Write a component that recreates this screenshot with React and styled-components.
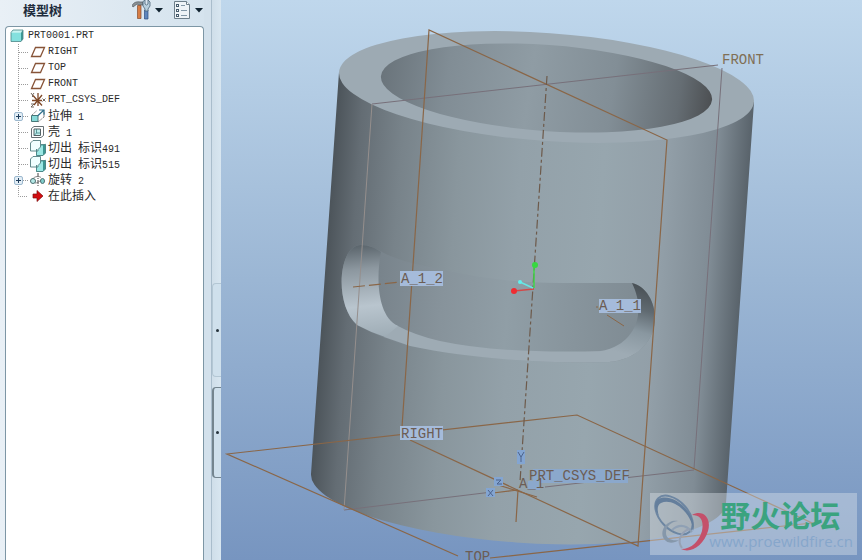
import React, { useState } from "react";
import styled, { createGlobalStyle } from "styled-components";

const GlobalStyle = createGlobalStyle`
  * {
    box-sizing: border-box;
  }

  body {
    margin: 0;
    font-family: "Liberation Mono", "Noto Sans CJK SC", monospace;
    color: #2a2a2a;
  }
`;

const Container = styled.div`
  display: flex;
  height: 100vh;
  overflow: hidden;
  background: #d3e1ec;
`;

//model tree
const SidePanel = styled.aside`
  display: flex;
  flex-direction: column;
  flex: 0 0 204px;
  padding-left: 5px;

  background: linear-gradient(90deg, #e9f0f6, #d5e3ee);
`;

const PanelHeader = styled.header`
  display: flex;
  align-items: center;
  height: 26px;
  padding: 0 1px 6px 18px;
`;

const Title = styled.h1`
  flex: 1;
  margin: 0;

  color: #1e2c3c;
  font-family: "Noto Sans CJK SC", sans-serif;
  font-size: 13px;
  font-weight: 700;
  line-height: 20px;
`;

const ToolBtn = styled.button`
  display: flex;
  align-items: center;
  gap: 4px;
  margin-left: 10px;
  padding: 0;

  border: none;
  background: none;
  cursor: pointer;
`;

const TreeBox = styled.nav`
  flex: 1;
  padding-top: 1px;

  border: 1px solid #7d96a5;
  border-bottom: none;
  border-radius: 4px 4px 0 0;
  background: #fff;
`;

const TreeList = styled.ul`
  margin: 0;
  padding: 0;
  list-style: none;
`;

const TreeRow = styled.div`
  display: flex;
  align-items: center;
  gap: ${(props) => (props.$root ? "4px" : "2px")};
  height: 16px;
  padding-left: ${(props) => (props.$root ? "4px" : "0")};
`;

const Branch = styled.div`
  display: grid;
  align-items: center;
  width: 22px;
  height: 16px;

  > * {
    grid-area: 1 / 1;
  }
`;

const Expander = styled.button`
  width: 9px;
  height: 9px;
  margin-left: 8px;
  padding: 0;

  border: 1px solid #9db9cf;
  border-radius: 2px;
  background: #e2edf5;
  line-height: 0;
  cursor: pointer;

  svg {
    display: block;
  }
`;

const Label = styled.span`
  font-size: 10px;
  line-height: 16px;
  white-space: pre;
`;

const Hanzi = styled.span`
  font-family: "Noto Sans CJK SC", sans-serif;
  font-size: 12px;
`;

//splitter
const Splitter = styled.div`
  display: flex;
  flex-direction: column;
  align-items: flex-end;
  gap: 10px;
  flex: 0 0 17px;
  padding-top: 283px;

  background: linear-gradient(
    90deg,
    #d3e1ec 7px,
    #a9bdcc 7px,
    #a9bdcc 8px,
    #cfdee9 8px,
    #d8e6f0
  );
`;

const Handle = styled.button`
  display: flex;
  align-items: center;
  justify-content: center;
  width: 9px;
  height: ${(props) => (props.$raised ? "91px" : "94px")};
  padding: 0;

  border: 1px solid ${(props) => (props.$raised ? "#74858f" : "#b4c7d4")};
  border-left-width: ${(props) => (props.$raised ? "2px" : "1px")};
  border-right: none;
  border-radius: 4px 0 0 4px;
  background: #cfe0ec;
  cursor: ew-resize;

  &::before {
    content: "";
    width: 3px;
    height: 3px;
    border-radius: 50%;
    background: #26333d;
  }
`;

//3d view
const Viewport = styled.main`
  position: relative;
  flex: 1;
  min-width: 0;
  overflow: hidden;

  background: linear-gradient(180deg, #bfd7ec 0%, #9bb6d4 50%, #7795c0 100%);
`;

const Scene = styled.svg`
  display: block;
  width: 100%;
  height: 100%;

  text {
    font-family: "Liberation Mono", monospace;
    font-size: 14px;
  }
`;

const Watermark = styled.a`
  position: absolute;
  right: 5px;
  bottom: 5px;

  display: flex;
  align-items: center;
  height: 62px;
  padding: 0 4px 0 2px;

  background: rgba(220, 226, 234, 0.42);
  text-decoration: none;
`;

const SiteText = styled.div`
  display: flex;
  flex-direction: column;
`;

const SiteName = styled.span`
  padding-left: 11px;

  color: #3ba37f;
  font-family: "Noto Sans CJK SC", sans-serif;
  font-size: 30px;
  font-weight: 700;
  line-height: 34px;
`;

const SiteUrl = styled.span`
  color: #86a6cb;
  font-family: "Open Sans", sans-serif;
  font-size: 15px;
  line-height: 20px;
`;

const DropArrow = () => (
  <svg width="8" height="5" viewBox="0 0 8 5">
    <path d="M0 0h8L4 4.5z" fill="#10222f" />
  </svg>
);

const ToolsIcon = () => (
  <svg width="19" height="20" viewBox="0 0 19 20">
    <path d="M0 5.5C2 2 5 1.500 8 2h3v3H7L5 4 1 7z" fill="#8c9296" stroke="#4e565c" strokeWidth=".7" />
    <path d="M5.500 5.500h3.500v13h-3.500z" fill="#d77d45" stroke="#874c2c" strokeWidth=".7" />
    <path d="M12.500 10h3.500v9h-3.500z" fill="#5e86bd" stroke="#2d4d82" strokeWidth=".7" />
    <path d="M11 1.500 13 0v4l1.500 1L16 4V0l2 2v4l-2 3v2h-3V9l-2-3z" fill="#b8cfdd" stroke="#4b6578" strokeWidth=".8" />
  </svg>
);

const ListIcon = () => (
  <svg width="18" height="20" viewBox="0 0 18 20">
    <path d="M1.500 1.500h12l3 3v14h-15z" fill="#eef3f7" stroke="#6d7e8a" />
    <path d="M13.500 1.500v3h3" fill="#fff" stroke="#6d7e8a" />
    <path d="M3 4h3v3H3zM3 9h3v3H3zM3 14h3v3H3z" fill="#455b6c" />
    <path d="M4 5h1v1H4zM4 10h1v1H4zM4 15h1v1H4z" fill="#fff" />
    <path d="M8 5.500h4M8 10.500h6M8 15.500h6" stroke="#8297a7" />
  </svg>
);

const PartIcon = () => (
  <svg width="14" height="14" viewBox="0 0 14 14">
    <path d="M1 3.500 3 1h10l-2 2.500z" fill="#c9f4f2" />
    <path d="M11 3.500 13 1v9l-2 2.500z" fill="#3c9896" />
    <path d="M1 3.500h10v9H1z" fill="#84e0de" />
    <path d="M1 3.500 3 1h10v9l-2 2.500H1z" fill="none" stroke="#4a8586" strokeWidth=".8" />
  </svg>
);

const PlaneIcon = () => (
  <svg width="16" height="16" viewBox="0 0 16 16">
    <path d="M5.500 3.500h9l-4 9h-9z" fill="#fff" stroke="#875438" strokeWidth="1.300" />
  </svg>
);

const CsysIcon = () => (
  <svg width="16" height="16" viewBox="0 0 16 16">
    <path d="M8 1v8M2 8.500h10M3 3.500l9 10M12 3 4 13M8 9v5" stroke="#7e4828" strokeWidth="1.300" />
    <path d="M1 1l1.500 2L4 1M2.500 3v2M12.500 6.500l3 3M15.500 6.500l-3 3M1 12h3l-3 3h3" fill="none" stroke="#65594f" strokeWidth=".9" />
  </svg>
);

const ExtrudeIcon = () => (
  <svg width="16" height="16" viewBox="0 0 16 16">
    <path d="M2 7 7 2.500M8 14l6-5M14 9V2.500" stroke="#777" strokeWidth=".9" strokeDasharray="2 1" />
    <path d="M1.500 7.500h6.500v6H1.500z" fill="#88dad9" stroke="#487878" />
    <path d="M7.500 8 14 2M9 2h5v5" fill="none" stroke="#30718d" strokeWidth="1.200" />
  </svg>
);

const ShellIcon = () => (
  <svg width="16" height="16" viewBox="0 0 16 16">
    <path d="M1.500 4.500 4 2.500h9.500v9L11 13.500H1.500z" fill="#fff" stroke="#555f63" strokeWidth=".9" />
    <path d="M4 5h6.500v6.500H4z" fill="#c2f0ee" stroke="#555f63" />
    <path d="M6.500 5v4h4M6.500 9 4 11.500" fill="none" stroke="#407e80" strokeWidth=".8" />
  </svg>
);

const CutIcon = () => (
  <svg width="16" height="16" viewBox="0 0 16 16">
    <path d="M6 7h3V5h5l1.500-1.500V13L13 15.500H6z" fill="#3c9693" />
    <path d="M6 8h3.500V5.500H13v10H6z" fill="#9be7e4" />
    <path d="M.5 3 3 .5h7.500V7L8 9.500V11H.5z" fill="#efffff" stroke="#517e80" strokeWidth=".9" />
    <path d="M6.500 9v6.500h6.500l2.500-2.500V4.500H11" fill="none" stroke="#447f80" strokeWidth=".9" />
  </svg>
);

const RevolveIcon = () => (
  <svg width="16" height="16" viewBox="0 0 16 16">
    <path d="M8 1v14" stroke="#454545" strokeDasharray="4 1 1 1" />
    <path d="M2.500 7C5 4 9 4 11 5.500M5 11c2 0 4-1 6-3" fill="none" stroke="#747474" strokeWidth=".9" />
    <ellipse cx="3" cy="9" rx="2.500" ry="2.500" fill="#b5e9e7" stroke="#4c6e70" />
    <ellipse cx="12.500" cy="9" rx="2" ry="2.500" fill="#80cfcd" stroke="#4c6e70" />
  </svg>
);

const InsertIcon = () => (
  <svg width="16" height="16" viewBox="0 0 16 16">
    <path d="M3 6h4V2.500L13 8l-6 5.500V10H3z" fill="#d20d10" stroke="#7c1010" strokeWidth=".7" />
  </svg>
);

const BranchLines = ({ last }) => (
  <svg width="22" height="16" viewBox="0 0 22 16" aria-hidden="true">
    <path
      d={last ? "M12.500 0v8.500H22" : "M12.500 0v16M13 8.500h9"}
      fill="none"
      stroke="#9b9b9b"
      strokeDasharray="1 1"
    />
  </svg>
);

const features = [
  { icon: PlaneIcon, text: "RIGHT" },
  { icon: PlaneIcon, text: "TOP" },
  { icon: PlaneIcon, text: "FRONT" },
  { icon: CsysIcon, text: "PRT_CSYS_DEF" },
  { icon: ExtrudeIcon, text: "拉伸 1", expandable: true },
  { icon: ShellIcon, text: "壳 1" },
  { icon: CutIcon, text: "切出 标识491" },
  { icon: CutIcon, text: "切出 标识515" },
  { icon: RevolveIcon, text: "旋转 2", expandable: true },
  { icon: InsertIcon, text: "在此插入" },
];

// Chinese runs are set larger than the half-width latin ones
const FeatureLabel = ({ text }) => (
  <Label>
    {text
      .split(/([\u4e00-\u9fff]+)/)
      .map((run, i) => (i % 2 ? <Hanzi key={i}>{run}</Hanzi> : run))}
  </Label>
);

const Feature = ({ feature, last }) => {
  const [open, setOpen] = useState(false);
  const Icon = feature.icon;

  return (
    <li>
      <TreeRow>
        <Branch>
          <BranchLines last={last} />
          {feature.expandable && (
            <Expander
              aria-label={feature.text}
              aria-expanded={open}
              onClick={() => setOpen(!open)}
            >
              <svg width="7" height="7" viewBox="0 0 7 7">
                <path d={open ? "M1 3.500h5" : "M1 3.500h5M3.500 1v5"} stroke="#1f3e5c" />
              </svg>
            </Expander>
          )}
        </Branch>
        <Icon />
        <FeatureLabel text={feature.text} />
      </TreeRow>
    </li>
  );
};

const Model = () => (
  <Scene viewBox="221 0 641 560" preserveAspectRatio="xMinYMin slice">
    <defs>
      <linearGradient id="body" gradientUnits="userSpaceOnUse" x1="326" y1="270" x2="740" y2="299">
        <stop offset="0" stopColor="#4d555b" />
        <stop offset=".06" stopColor="#646d74" />
        <stop offset=".16" stopColor="#78838a" />
        <stop offset=".3" stopColor="#89969d" />
        <stop offset=".45" stopColor="#93a1a9" />
        <stop offset=".65" stopColor="#97a6ae" />
        <stop offset=".8" stopColor="#929fa8" />
        <stop offset=".92" stopColor="#808c95" />
        <stop offset="1" stopColor="#59636b" />
      </linearGradient>
      <linearGradient id="bore" gradientUnits="userSpaceOnUse" x1="381" y1="76" x2="712" y2="100">
        <stop offset="0" stopColor="#6a747b" />
        <stop offset=".2" stopColor="#818d95" />
        <stop offset=".45" stopColor="#8f9ca4" />
        <stop offset=".7" stopColor="#828e96" />
        <stop offset=".9" stopColor="#656d73" />
        <stop offset="1" stopColor="#4c4f52" />
      </linearGradient>
      <linearGradient id="slotBack" gradientUnits="userSpaceOnUse" x1="376" y1="290" x2="640" y2="308">
        <stop offset="0" stopColor="#78838b" />
        <stop offset=".25" stopColor="#87939b" />
        <stop offset=".5" stopColor="#909ea6" />
        <stop offset="1" stopColor="#7f8b93" />
      </linearGradient>
      <linearGradient id="slotLeft" gradientUnits="userSpaceOnUse" x1="365" y1="245" x2="375" y2="338">
        <stop offset="0" stopColor="#5c666d" />
        <stop offset=".25" stopColor="#8c979f" />
        <stop offset=".65" stopColor="#b9c5ce" />
        <stop offset="1" stopColor="#9eacb5" />
      </linearGradient>
      <linearGradient id="slotRight" gradientUnits="userSpaceOnUse" x1="648" y1="285" x2="628" y2="355">
        <stop offset="0" stopColor="#474e53" />
        <stop offset=".35" stopColor="#606a71" />
        <stop offset=".65" stopColor="#8997a0" />
        <stop offset="1" stopColor="#9eabb4" />
      </linearGradient>
    </defs>

    <path
      d="M339 72 311 474A208 54 4.100 0 0 726 503L754 102z"
      fill="url(#body)"
    />
    <ellipse cx="546.500" cy="87" rx="208" ry="54" transform="rotate(4.100 546.500 87)" fill="#9daab3" />
    <ellipse cx="546.500" cy="88" rx="166" ry="43" transform="rotate(4.100 546.500 88)" fill="url(#bore)" />

    <path
      d="M361 245C371 245 378 250 388 255C400 260 410 263 430 267C475 277 510 283 560 283H632C646 286 655 302 655 318C655 340 638 359 610 362C550 364 470 359 410 346Q380 338 357 325C334 305 338 245 361 245z"
      fill="url(#slotBack)"
    />
    <path
      d="M396 325Q414 335 440 341Q500 354 603 351L610 362C550 364 470 359 410 346L384 337z"
      fill="#9eabb4"
    />
    <path
      d="M361 245C369 245 375 248 381 252C376 277 377 316 398 326L385 337Q370 332 357 325C334 305 338 245 361 245z"
      fill="url(#slotLeft)"
    />
    <path
      d="M632 283C646 286 655 302 655 318C655 340 638 360 608 362L600 351C628 348 650 320 632 283z"
      fill="url(#slotRight)"
    />

    {/* datum planes */}
    <g fill="none" stroke="#77707a" strokeWidth="1">
      <path d="M372 104 718 65M722 68 694 469" />
      <path d="M344 510 492 492M545 487 694 470" />
      <path d="M372 104 344 510" stroke="#958f8d" />
    </g>
    <g fill="none" stroke="#8a6647" strokeWidth="1.200">
      <path d="M402 427 429 30 667 140 638 546 410 440" />
      <path d="M458 556 227 454 577 415 812 523 490 558" />
      <path d="M547 76 520 482" stroke="#6d5a4b" strokeDasharray="9 3 3 3" />
      <path d="M518 490 516 522M495 484 537 497M493 493 518 490" />
      <path d="M353 287 400 282" strokeDasharray="12 4" />
      <path d="M596 307h2M607 315 624 326" strokeWidth="1" />
    </g>

    {/* spin center */}
    <path d="M534 288V265" stroke="#40d64a" strokeWidth="1.500" />
    <path d="M534 289 514 291" stroke="#d44848" strokeWidth="1.500" />
    <path d="M533 288 520 282" stroke="#67e6e4" strokeWidth="1.500" />
    <circle cx="535" cy="265" r="3" fill="#38d840" />
    <circle cx="514" cy="291" r="3" fill="#ee2c32" />
    <circle cx="520" cy="282" r="2" fill="#5ff0ee" />

    {/* tags */}
    <g fill="#a5bbda">
      <path d="M400 271h43v15h-43zM599 299h42v14h-42zM400 426h43v14h-43z" />
      <path d="M533 469h95v14h-88v7h-12v-9h5z" fill="#8ba8cc" />
      <path d="M517 450h8v14h-8zM494 477h9v9h-9zM486 488h9v9h-9z" fill="#83a5d2" />
    </g>
    <g fill="#6c5d54">
      <text x="722" y="64" fill="#806f55">FRONT</text>
      <text x="401" y="283">A_1_2</text>
      <text x="599" y="310">A_1_1</text>
      <text x="401" y="438">RIGHT</text>
      <text x="529" y="480">PRT_CSYS_DEF</text>
      <text x="519" y="488">A_1</text>
      <text x="465" y="561">TOP</text>
    </g>
    <g fill="none" stroke="#4c628b">
      <path d="M518 452l3 5 3-5M521 457v5M496 480h5l-4 4h5M488 490l5 6M493 490l-5 6" />
    </g>
  </Scene>
);

const SiteLogo = () => (
  <svg width="57" height="60" viewBox="0 0 57 60" fill="none">
    <ellipse cx="22" cy="21" rx="23" ry="14" transform="rotate(47 22 21)" stroke="#6d86a2" strokeWidth="2" />
    <path
      d="M41 37C41 21 22 3 9 9C5 11 5 16 7 22C1 13 2 6 9 4C25 0 46 23 41 37z"
      fill="#647e9c"
    />
    <path
      d="M26 27C17 25 8 34 11 43C14 50 21 50 27 46C20 47 14 45 14 39C14 32 19 28 26 27z"
      fill="#8597aa"
    />
    <path d="M20 36C27 30 34 31 40 38" stroke="#8fa0b4" strokeWidth="2" />
    <path
      d="M40 21C50 15 60 23 56 37C52 51 39 60 29 55C40 55 47 47 50 37C52 27 49 21 40 21z"
      fill="#c4506a"
    />
    <path d="M30 54C25 47 28 39 37 35" stroke="#97a1b3" strokeWidth="2" />
  </svg>
);

const App = () => {
  return (
    <>
      <GlobalStyle />
      <Container>
        <SidePanel>
          <PanelHeader>
            <Title>模型树</Title>
            <ToolBtn aria-label="设置">
              <ToolsIcon />
              <DropArrow />
            </ToolBtn>
            <ToolBtn aria-label="显示">
              <ListIcon />
              <DropArrow />
            </ToolBtn>
          </PanelHeader>

          <TreeBox>
            <TreeRow $root>
              <PartIcon />
              <FeatureLabel text="PRT0001.PRT" />
            </TreeRow>
            <TreeList>
              {features.map((feature, i) => (
                <Feature
                  key={feature.text}
                  feature={feature}
                  last={i === features.length - 1}
                />
              ))}
            </TreeList>
          </TreeBox>
        </SidePanel>

        <Splitter>
          <Handle aria-label="浏览器" />
          <Handle $raised aria-label="导航器" />
        </Splitter>

        <Viewport>
          <Model />
          <Watermark href="#">
            <SiteLogo />
            <SiteText>
              <SiteName>野火论坛</SiteName>
              <SiteUrl>www.proewildfire.cn</SiteUrl>
            </SiteText>
          </Watermark>
        </Viewport>
      </Container>
    </>
  );
};

export default App;
